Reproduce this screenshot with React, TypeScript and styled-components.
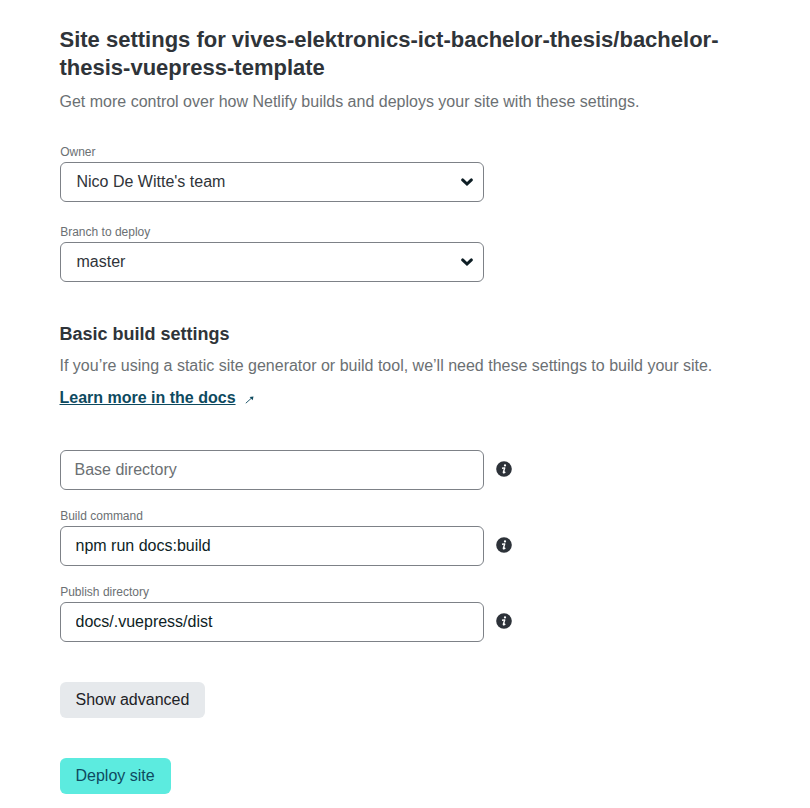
import React from "react";
import styled, { createGlobalStyle } from "styled-components";

const GlobalStyle = createGlobalStyle`
  *, *::before, *::after { box-sizing: border-box; }
  body {
    margin: 0;
    background: #fff;
    color: #2d3b41;
    font-family: "Liberation Sans", Arial, sans-serif;
    font-size: 16px;
    line-height: 24px;
  }
`;

const Page = styled.main`
  height: 808px;
  padding: 26px 60px 0 59.5px;
  overflow: hidden;
`;

const Title = styled.h1`
  margin: 0;
  font-size: 22px;
  line-height: 28px;
  color: #2f3439;
`;

const Subtitle = styled.h2`
  margin: 0;
  font-size: 18px;
  line-height: 24px;
  color: #2f3439;
`;

const Description = styled.p`
  margin: 8px 0 0;
  color: #6b7073;
`;

const DocsLink = styled.a`
  display: inline-flex;
  margin-top: 8px;
  font-weight: 700;
  color: #0e4a5f;
  text-decoration: none;
`;

const LinkText = styled.span`
  text-decoration: underline;
`;

const Arrow = styled.svg`
  width: 9px;
  height: 8px;
  margin: 10px 0 0 9.8px;
`;

const Section = styled.section<{ $top: number }>`
  margin-top: ${(p) => p.$top}px;
`;

const Fields = styled.div<{ $top: number; $gap: number }>`
  display: flex;
  flex-direction: column;
  gap: ${(p) => p.$gap}px;
  margin-top: ${(p) => p.$top}px;
`;

const Field = styled.div`
  display: flex;
  flex-direction: column;
`;

const Label = styled.label`
  height: 18px;
  padding-left: 0.7px;
  font-size: 12px;
  line-height: 16px;
  color: #6b7073;
`;

const Row = styled.div`
  display: flex;
  align-items: center;
  gap: 12px;
  padding-left: 0.5px;
`;

const SelectBox = styled.div`
  display: flex;
  align-items: center;
  justify-content: space-between;
  width: 424px;
  height: 40px;
  padding: 0 9px 0 15.5px;
  border: 1px solid #7d8187;
  border-radius: 6px;
  color: #2f3439;
`;

const Chevron = styled.svg`
  width: 14px;
  height: 10px;
`;

const TextInput = styled.input<{ $inset: number }>`
  width: 424px;
  height: 40px;
  padding: 0 14px 0 ${(p) => p.$inset}px;
  border: 1px solid #7d8187;
  border-radius: 6px;
  background: #fff;
  color: #0e1e25;
  font: inherit;
  outline: none;
  &::placeholder { color: #6b7073; opacity: 1; }
`;

const Info = styled.svg`
  width: 16px;
  height: 16px;
  margin-bottom: 2px;
`;

const Button = styled.button<{ $primary?: boolean }>`
  display: block;
  width: ${(p) => (p.$primary ? 111 : 145)}px;
  height: 36px;
  margin: 40px 0 0 0.5px;
  padding: 0 0 0 15.5px;
  border: 0;
  border-radius: 6px;
  background: ${(p) => (p.$primary ? "#5cebdf" : "#e6e9ec")};
  color: ${(p) => (p.$primary ? "#0e4a5f" : "#1d2226")};
  font: inherit;
  text-align: left;
`;

function Select({ label, value }: { label: string; value: string }) {
  return (
    <Field>
      <Label>{label}</Label>
      <Row>
        <SelectBox>
          {value}
          <Chevron viewBox="0 0 14 10" fill="none" stroke="#0e1e25" strokeWidth="3" strokeLinecap="round">
            <path d="M2.6 2.9 7 7 11.4 2.9" />
          </Chevron>
        </SelectBox>
      </Row>
    </Field>
  );
}

function Input({ label, value, placeholder }: { label?: string; value?: string; placeholder?: string }) {
  return (
    <Field>
      {label && <Label>{label}</Label>}
      <Row>
        <TextInput $inset={value ? 14.5 : 13.5} defaultValue={value} placeholder={placeholder} />
        <Info viewBox="0 0 16 16">
          <circle cx="8" cy="8" r="7.8" fill="#2d3239" />
          <circle cx="9" cy="4.4" r="1.15" fill="#fff" />
          <path d="M6 7.3 8.7 6.9 7.4 11.3Q7.2 12.2 9.3 11" fill="none" stroke="#fff" strokeWidth="1.45" strokeLinejoin="round" />
        </Info>
      </Row>
    </Field>
  );
}

export default function App() {
  return (
    <>
      <GlobalStyle />
      <Page>
        <Title>Site settings for vives-elektronics-ict-bachelor-thesis/bachelor-thesis-vuepress-template</Title>
        <Description>Get more control over how Netlify builds and deploys your site with these settings.</Description>
        <Fields $top={30} $gap={22}>
          <Select label="Owner" value="Nico De Witte's team" />
          <Select label="Branch to deploy" value="master" />
        </Fields>
        <Section $top={40}>
          <Subtitle>Basic build settings</Subtitle>
          <Description>If you’re using a static site generator or build tool, we’ll need these settings to build your site.</Description>
          <DocsLink>
            <LinkText>Learn more in the docs</LinkText>
            <Arrow viewBox="0 0 9 8" fill="none" stroke="#0e4a5f">
              <path d="M.8 7.2 6.8 1.8" strokeWidth=".9" />
              <path d="M8.5.5 7.7 4.2 4.6 1.1Z" fill="#0e4a5f" stroke="none" />
            </Arrow>
          </DocsLink>
        </Section>
        <Fields $top={40} $gap={18}>
          <Input placeholder="Base directory" />
          <Input label="Build command" value="npm run docs:build" />
          <Input label="Publish directory" value="docs/.vuepress/dist" />
        </Fields>
        <Button>Show advanced</Button>
        <Button $primary>Deploy site</Button>
      </Page>
    </>
  );
}
